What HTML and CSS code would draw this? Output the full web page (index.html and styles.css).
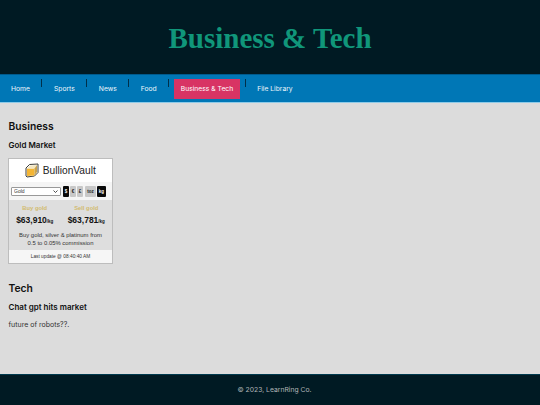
FILE: index.html
```html
<!DOCTYPE html>
<html lang="en">
<head>
<meta charset="utf-8">
<title>Business &amp; Tech</title>
<link rel="stylesheet" href="styles.css">
</head>
<body>
<header class="masthead"><h1>Business &amp; Tech</h1></header>
<nav class="nav">
  <a class="nav-link first" href="#">Home</a>
  <a class="nav-link" href="#">Sports</a>
  <a class="nav-link" href="#">News</a>
  <a class="nav-link" href="#">Food</a>
  <a class="nav-link active" href="#">Business &amp; Tech</a>
  <a class="nav-link last" href="#">File Library</a>
</nav>
<main class="content">
  <h2>Business</h2>
  <h3>Gold Market</h3>
  <div class="widget">
    <div class="logo">
      <svg class="logo-icon" width="14" height="15" viewBox="0 0 14 15">
        <path d="M1 5 L4.5 1.5 L13 1 L13 9.5 L9.5 13 L2 14 L1 13 Z" fill="#fff" stroke="#3f3f38" stroke-width="1" stroke-linejoin="round"/>
        <path d="M2 5.5 L9.5 5.5 L9.5 12.5 L2 13 Z" fill="#f4b534"/>
        <path d="M2 5.5 L5 2.5 L12 2 L9.5 5.5 Z" fill="#f3e6c0"/>
        <path d="M9.5 5.5 L12 2 L12 9 L9.5 12.5 Z" fill="#c9a24a"/>
      </svg>
      <span>BullionVault</span>
    </div>
    <div class="controls">
      <select class="metal"><option>Gold</option></select>
      <div class="pills">
        <span class="pill on">$</span>
        <span class="pill">€</span>
        <span class="pill">£</span>
      </div>
      <div class="pills">
        <span class="pill toz">toz</span>
        <span class="pill kg on">kg</span>
      </div>
    </div>
    <div class="prices">
      <div class="price-grid">
        <div class="price">
          <div class="price-label">Buy gold</div>
          <div class="price-value">$63,910<small>/kg</small></div>
        </div>
        <div class="price">
          <div class="price-label">Sell gold</div>
          <div class="price-value">$63,781<small>/kg</small></div>
        </div>
      </div>
      <p class="commission">Buy gold, silver &amp; platinum from<br>0.5 to 0.05% commission</p>
    </div>
    <div class="updated">Last update @ 08:40:40 AM</div>
  </div>
  <h2 class="second">Tech</h2>
  <h3>Chat gpt hits market</h3>
  <p class="body-text">future of robots??.</p>
</main>
<footer class="footer">© 2023, LearnRing Co.</footer>
</body>
</html>
```
FILE: styles.css
```css
* { box-sizing: border-box; }
html, body { height: 100%; }
body {
  margin: 0;
  min-height: 405px;
  display: flex;
  flex-direction: column;
  font-family: Inter, "Liberation Sans", sans-serif;
  background: #dcdcdc;
  color: #111;
}
.masthead {
  height: 74px;
  background: #001a23;
  display: flex;
  align-items: center;
  justify-content: center;
  padding-top: 3px;
}
.masthead h1 {
  margin: 0;
  font-family: "Liberation Serif", "DejaVu Serif", serif;
  font-weight: 700;
  font-size: 29px;
  color: #10967a;
}
.nav {
  height: 29px;
  background: #0077b6;
  border-top: 1px solid #005a8c;
  border-bottom: 1px solid #8fcbe8;
  display: flex;
  align-items: flex-start;
  padding-top: 4px;
}
.nav-link {
  position: relative;
  height: 20px;
  line-height: 20px;
  padding: 0 6.5px;
  margin: 0 5.5px;
  font-size: 6.75px;
  color: #eef6fb;
  text-decoration: none;
}
.nav-link.first { margin-left: 4.5px; }
.nav-link::after {
  content: "";
  position: absolute;
  right: -6px;
  top: 0;
  height: 8px;
  width: 1px;
  background: #00304a;
}
.nav-link.active {
  background: #d83464;
  color: #fff;
}
.nav-link.last::after { display: none; }
.content {
  flex: 1;
  padding: 16px 8.5px 0;
}
h2 {
  margin: 0 0 5px;
  font-size: 10.3px;
  line-height: 15px;
  font-weight: 600;
}
h2.second { margin-top: 17px; }
h3 {
  margin: 0 0 7px;
  font-size: 8px;
  line-height: 12px;
  font-weight: 600;
}
.body-text {
  margin: 0;
  font-size: 7px;
  line-height: 10px;
  color: #333;
}
.widget {
  width: 105px;
  margin-left: -0.5px;
  background: #fff;
  border: 1px solid #bdbdbd;
  font-family: "Liberation Sans", Arial, sans-serif;
}
.logo {
  height: 23px;
  display: flex;
  align-items: center;
  justify-content: center;
  gap: 3.5px;
  font-size: 10.2px;
  color: #222;
}
.controls {
  height: 18px;
  background: #f5f5f5;
  display: flex;
  align-items: center;
  padding-left: 2px;
  gap: 2px;
}
.metal {
  appearance: none;
  width: 50px;
  height: 9px;
  font-size: 5px;
  font-family: "Liberation Sans", Arial, sans-serif;
  line-height: 7px;
  padding: 0 0 0 2px;
  background: #fff url("data:image/svg+xml,%3Csvg xmlns='http://www.w3.org/2000/svg' width='5' height='3'%3E%3Cpath d='M.5.5 2.5 2.5 4.5.5' fill='none' stroke='%23222' stroke-width='.8'/%3E%3C/svg%3E") no-repeat right 2px center;
  border: 1px solid #999;
  border-radius: 1px;
  color: #333;
}
.pills { display: flex; gap: 1px; }
.pill {
  width: 6px;
  height: 11px;
  background: #c8c8c8;
  color: #222;
  font-size: 4.5px;
  font-weight: 700;
  line-height: 11px;
  text-align: center;
  border-radius: 1px;
}
.pill.toz { width: 11px; }
.pill.kg { width: 9px; }
.pill.on { background: #0a0a0a; color: #fff; }
.prices {
  background: #dedede;
  padding: 4px 0 0;
  height: 50px;
}
.price-grid { display: grid; grid-template-columns: 1fr 1fr; }
.price { text-align: center; }
.price-label {
  font-size: 5.8px;
  font-weight: 700;
  line-height: 8px;
  color: #d2bb70;
}
.price-value {
  margin-top: 3px;
  font-size: 8.5px;
  font-weight: 700;
  line-height: 11px;
  color: #111;
}
.price-value small { font-size: 4.5px; }
.commission {
  margin: 4px 0 0;
  font-size: 5.9px;
  line-height: 8px;
  text-align: center;
  color: #333;
}
.updated {
  height: 13px;
  font-size: 4.8px;
  line-height: 13px;
  text-align: center;
  background: #f6f6f6;
  color: #333;
}
.footer {
  height: 31px;
  padding-left: 9px;
  background: #001a23;
  border-top: 1px solid #003a4e;
  color: #b0b5b7;
  font-size: 6.8px;
  line-height: 30px;
  text-align: center;
}
```
